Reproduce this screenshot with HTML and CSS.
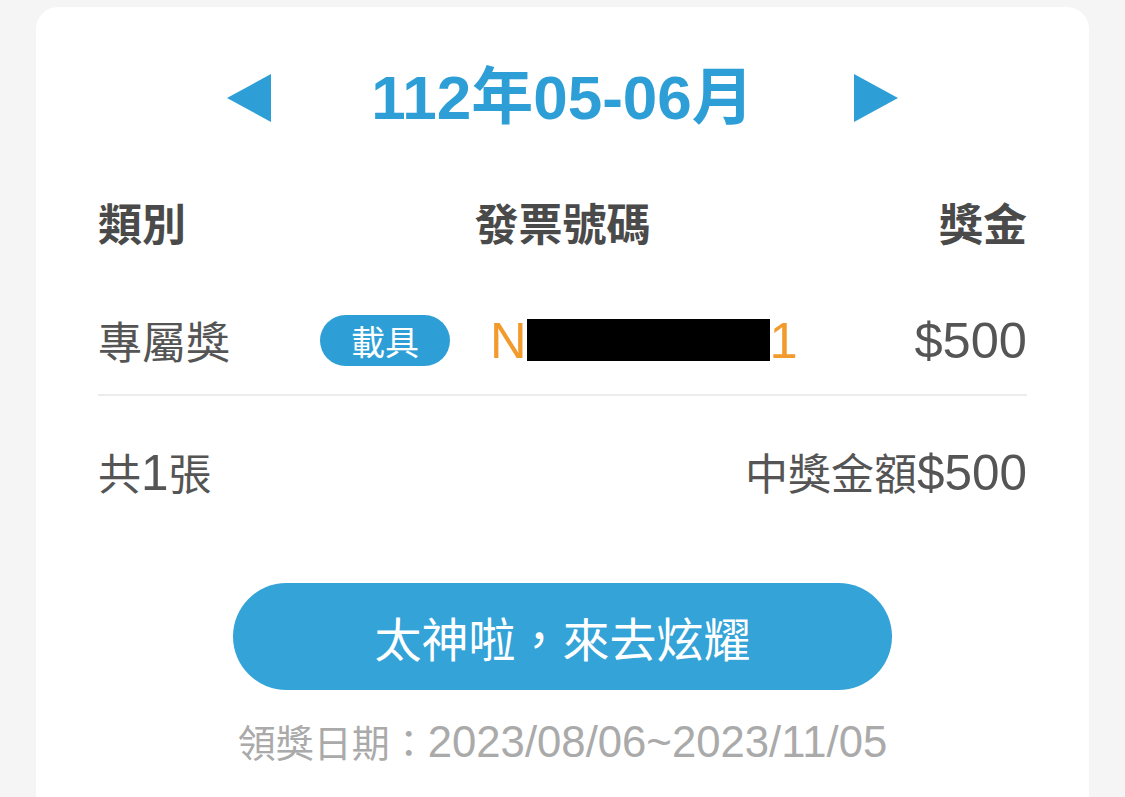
FILE: index.html
```html
<!DOCTYPE html>
<html lang="zh-Hant">
<head>
<meta charset="utf-8">
<link rel="stylesheet" href="styles.css">
</head>
<body>
<div class="card">
  <div class="period">
    <svg class="arrow" width="44" height="48" viewBox="0 0 44 48"><polygon points="44,0 44,48 0,24" fill="#2e9fd6"/></svg>
    <div class="period-title">112年05-06月</div>
    <svg class="arrow" width="44" height="48" viewBox="0 0 44 48"><polygon points="0,0 0,48 44,24" fill="#2e9fd6"/></svg>
  </div>
  <div class="head-row">
    <span>類別</span>
    <span>發票號碼</span>
    <span>獎金</span>
  </div>
  <div class="item-row">
    <span class="cat">專屬獎</span>
    <span class="badge">載具</span>
    <span class="number"><span class="l">N</span><span class="redact"></span><span class="l">1</span></span>
    <span class="amount"><span class="l">$500</span></span>
  </div>
  <div class="total-row">
    <span>共<span class="l">1</span>張</span>
    <span>中獎金額<span class="l">$500</span></span>
  </div>
  <div class="btn-wrap">
    <button class="share-btn">太神啦，來去炫耀</button>
  </div>
  <div class="date">領獎日期：<span class="l">2023/08/06~2023/11/05</span></div>
</div>
</body>
</html>
```

FILE: styles.css
```css
html, body {
  margin: 0;
  padding: 0;
  background: #f5f5f5;
  font-family: "Liberation Sans", "Noto Sans CJK TC", sans-serif;
  overflow: hidden;
}
.l { font-size: 1.15em; }
.card {
  margin: 7px 0 0 36px;
  width: 1053px;
  height: 820px;
  background: #fff;
  border-radius: 22px;
  box-sizing: border-box;
  padding: 55px 62px 0 62px;
}
.period {
  height: 72px;
  display: flex;
  align-items: center;
  justify-content: center;
  gap: 100px;
}
.arrow { display: block; }
.period-title {
  color: #2e9fd6;
  font-size: 62px;
  font-weight: bold;
  line-height: 72px;
}
.head-row {
  margin-top: 58px;
  height: 60px;
  display: flex;
  justify-content: space-between;
  align-items: center;
  font-size: 44px;
  font-weight: bold;
  color: #4a4a4a;
}
.item-row {
  margin-top: 58px;
  height: 60px;
  padding-bottom: 24px;
  border-bottom: 2px solid #ececec;
  display: flex;
  align-items: center;
  font-size: 44px;
  color: #555;
}
.cat { width: 222px; }
.badge {
  width: 130px;
  height: 51px;
  border-radius: 26px;
  background: #2e9fd6;
  color: #fff;
  font-size: 34px;
  display: flex;
  align-items: center;
  justify-content: center;
}
.number {
  margin-left: 40px;
  color: #f39a2c;
  display: flex;
  align-items: center;
}
.redact {
  display: inline-block;
  width: 243px;
  height: 42px;
  background: #000;
}
.amount { margin-left: auto; }
.total-row {
  margin-top: 45px;
  height: 60px;
  display: flex;
  justify-content: space-between;
  align-items: center;
  font-size: 43px;
  color: #555;
}
.btn-wrap {
  margin-top: 82px;
  display: flex;
  justify-content: center;
}
.share-btn {
  width: 659px;
  height: 107px;
  border: none;
  border-radius: 54px;
  background: #33a3d8;
  color: #fff;
  font-family: inherit;
  font-size: 47px;
  padding: 0;
}
.date {
  margin-top: 27px;
  height: 50px;
  line-height: 50px;
  text-align: center;
  font-size: 38px;
  color: #aaaaaa;
}
```
